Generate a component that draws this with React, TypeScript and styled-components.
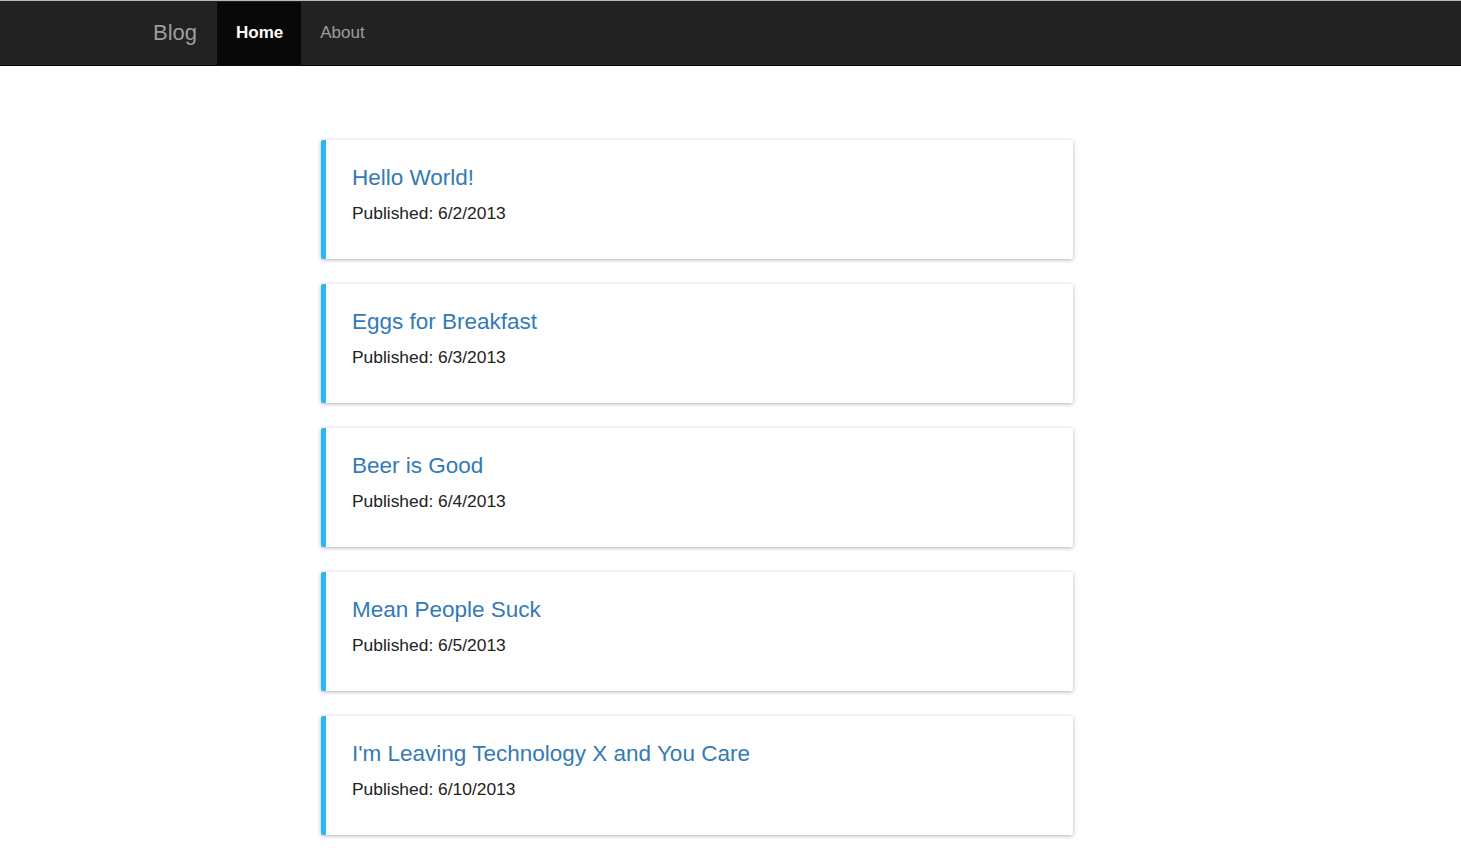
import React from "react";
import styled, { createGlobalStyle } from "styled-components";

type Post = {
	title: string;
	published: string;
};

const posts: Post[] = [
	{ title: "Hello World!", published: "6/2/2013" },
	{ title: "Eggs for Breakfast", published: "6/3/2013" },
	{ title: "Beer is Good", published: "6/4/2013" },
	{ title: "Mean People Suck", published: "6/5/2013" },
	{ title: "I'm Leaving Technology X and You Care", published: "6/10/2013" },
];

const App = () => {
	return (
		<>
			<GlobalStyle />
			<Navbar>
				<NavInner>
					<Brand>Blog</Brand>
					<NavItem active={true}>Home</NavItem>
					<NavItem active={false}>About</NavItem>
				</NavInner>
			</Navbar>
			<Main>
				{posts.map((post) => (
					<Card key={post.title}>
						<Title href="#">{post.title}</Title>
						<Meta>Published: {post.published}</Meta>
					</Card>
				))}
			</Main>
		</>
	);
};

const GlobalStyle = createGlobalStyle`
	body {
		margin: 0;
		background: #fff;
		font-family: "Liberation Sans", Arial, sans-serif;
		color: #333;
	}
`;

const Navbar = styled.nav`
	background-color: #222;
	border-top: 1px solid #b8b8b8;
	border-bottom: 1px solid #080808;
	height: 66px;
	box-sizing: border-box;
	padding-top: 1px;
`;

const NavInner = styled.div`
	display: flex;
	align-items: stretch;
	height: 63px;
	padding-left: 153px;
`;

const Brand = styled.div`
	display: flex;
	align-items: center;
	color: #9d9d9d;
	font-size: 22px;
	padding: 0 20px 2px 0;
`;

const NavItem = styled.a<{ active: boolean }>`
	display: flex;
	align-items: center;
	padding: 0 18px 2px 19px;
	font-size: 17px;
	text-decoration: none;
	${(props) =>
		props.active
			? "background-color: #080808; color: #fff; font-weight: 700;"
			: "color: #9d9d9d;"}
`;

const Main = styled.main`
	display: flex;
	flex-direction: column;
	gap: 25px;
	width: 752px;
	padding: 74px 0 20px 321px;
`;

const Card = styled.div`
	display: flex;
	flex-direction: column;
	gap: 11px;
	height: 119px;
	box-sizing: border-box;
	padding: 25px 26px 0;
	background: #fff;
	border-left: 5px solid #29b6f6;
	border-radius: 2px;
	box-shadow: 0 1px 4px rgba(0, 0, 0, 0.3);
`;

const Title = styled.a`
	color: #337ab7;
	font-size: 22.5px;
	text-decoration: none;
	line-height: 26px;
`;

const Meta = styled.div`
	font-size: 17.4px;
	line-height: 22px;
	color: #222;
`;

export default App;
